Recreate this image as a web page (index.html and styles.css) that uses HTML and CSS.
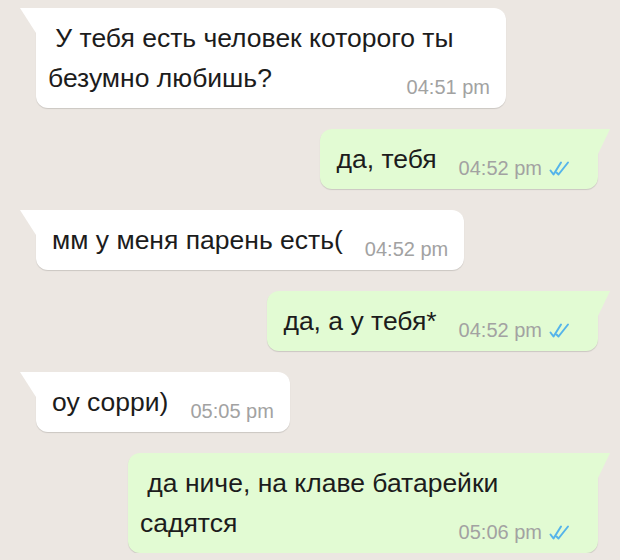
FILE: index.html
```html
<!DOCTYPE html>
<html lang="ru">
<head>
    <meta charset="UTF-8">
    <meta name="viewport" content="width=device-width, initial-scale=1.0">
    <title>Chat</title>
    <link rel="stylesheet" href="styles.css">
</head>
<body>
    <div class="chat">
        <div class="row in">
            <div class="bubble wide">
                <span class="text">&nbsp;У тебя есть человек которого ты безумно любишь?</span>
                <span class="meta"><span class="time">04:51 pm</span></span>
            </div>
        </div>

        <div class="row out">
            <div class="bubble">
                <span class="text">да, тебя</span>
                <span class="meta"><span class="time">04:52 pm</span>
                    <svg class="ticks" width="21" height="15" viewBox="0 0 21 15"><path d="M1.5 9.5 L4.5 13.5 L12 1.5 M7.5 11.5 L9.5 13.5 L19 1.5" fill="none" stroke="#55b4ea" stroke-width="2" stroke-linecap="round" stroke-linejoin="round"/></svg>
                </span>
            </div>
        </div>

        <div class="row in">
            <div class="bubble">
                <span class="text">мм у меня парень есть(</span>
                <span class="meta"><span class="time">04:52 pm</span></span>
            </div>
        </div>

        <div class="row out">
            <div class="bubble">
                <span class="text">да, а у тебя*</span>
                <span class="meta"><span class="time">04:52 pm</span>
                    <svg class="ticks" width="21" height="15" viewBox="0 0 21 15"><path d="M1.5 9.5 L4.5 13.5 L12 1.5 M7.5 11.5 L9.5 13.5 L19 1.5" fill="none" stroke="#55b4ea" stroke-width="2" stroke-linecap="round" stroke-linejoin="round"/></svg>
                </span>
            </div>
        </div>

        <div class="row in">
            <div class="bubble">
                <span class="text">оу сорри)</span>
                <span class="meta"><span class="time">05:05 pm</span></span>
            </div>
        </div>

        <div class="row out">
            <div class="bubble wide">
                <span class="text">&nbsp;да ниче, на клаве батарейки садятся</span>
                <span class="meta"><span class="time">05:06 pm</span>
                    <svg class="ticks" width="21" height="15" viewBox="0 0 21 15"><path d="M1.5 9.5 L4.5 13.5 L12 1.5 M7.5 11.5 L9.5 13.5 L19 1.5" fill="none" stroke="#55b4ea" stroke-width="2" stroke-linecap="round" stroke-linejoin="round"/></svg>
                </span>
            </div>
        </div>
    </div>
</body>
</html>
```

FILE: styles.css
```css
body {
    margin: 0;
    background-color: #ece7e2;
    font-family: "Liberation Sans", Arial, sans-serif;
    color: #1c1c1c;
}
.chat {
    display: flex;
    flex-direction: column;
    gap: 21px;
    padding: 8px 0 0;
}
.row {
    display: flex;
}
.row.in {
    justify-content: flex-start;
    padding-left: 36px;
}
.row.out {
    justify-content: flex-end;
    padding-right: 22px;
}
.bubble {
    position: relative;
    display: flow-root;
    max-width: 470px;
    padding: 10px 16px;
    font-size: 26.5px;
    line-height: 40px;
    background: #ffffff;
    border-radius: 0 12px 12px 12px;
    box-shadow: 0 1px 1px rgba(0, 0, 0, 0.14);
}
.bubble.wide {
    width: 470px;
    box-sizing: border-box;
    padding-left: 12px;
}
.row.in .bubble::before {
    content: "";
    position: absolute;
    top: 0;
    left: -16px;
    width: 16px;
    height: 25px;
    background: #ffffff;
    clip-path: polygon(0 0, 100% 0, 100% 100%);
}
.row.out .bubble {
    background: #e2fbd3;
    border-radius: 12px 0 12px 12px;
    padding-right: 28px;
}
.row.out .bubble::before {
    content: "";
    position: absolute;
    top: 0;
    right: -12px;
    width: 12px;
    height: 25px;
    background: #e2fbd3;
    clip-path: polygon(0 0, 100% 0, 0 100%);
}
.meta {
    float: right;
    display: flex;
    align-items: center;
    gap: 7px;
    margin: 19px 0 0 22px;
    line-height: 20px;
    height: 20px;
}
.time {
    font-size: 20px;
    color: #a2a2a2;
}
.ticks {
    display: block;
}
```
